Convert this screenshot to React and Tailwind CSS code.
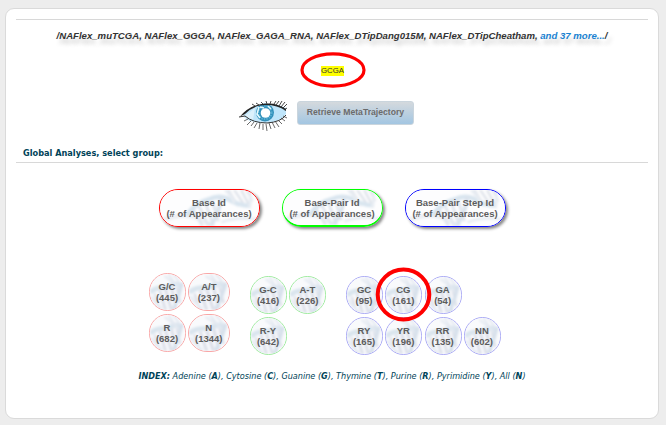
const RED = 'border-[#f9a6a6]';
const GREEN = 'border-[#9deb9d]';
const BLUE = 'border-[#a9a9f5]';

function Helix({ small }) {
  return (
    <svg
      className="absolute inset-0 h-full w-full blur-[0.8px]"
      viewBox={small ? '0 0 36 37' : '0 0 100 38'}
      preserveAspectRatio="none"
      fill="none"
    >
      {small ? (
        <>
          <rect x="-2" y="-2" width="40" height="41" fill="#f9fafc" />
          <path d="M12 16Q22 8 32 11Q31 26 24 38H8Z" fill="#eceff5" />
          <path d="M5 20 10 37M10 17 16 37M16 16 22 37M22 14 27 35M27 12 31 30" stroke="#dcdfe8" strokeWidth="2.4" />
          <path d="M7 19 13 37M13 17 19 37M19 15 25 37M25 13 30 33" stroke="#fcfcfe" strokeWidth="1.7" />
          <path d="M0 19Q6 14 12 14T24 11Q28 9 32 13" stroke="#dae5ee" strokeWidth="5" />
          <path d="M19 0 29 15M24 0 32 11M15 2 24 9" stroke="#e4e9f1" strokeWidth="2" />
          <path d="M33 9Q30 22 24 37" stroke="#d7e1ec" strokeWidth="3.6" />
          <path d="M1 23Q6 31 12 36" stroke="#e8edf4" strokeWidth="3" />
        </>
      ) : (
        <>
          <rect x="-2" y="-2" width="104" height="42" fill="#fdfdfe" />
          <path d="M0 33Q14 27 26 27T52 38" stroke="#eceff4" strokeWidth="5" />
          <path d="M33 20 43 38M39 16 49 38M46 14 54 38M53 12 59 33" stroke="#e1e6ee" strokeWidth="3" />
          <path d="M69 0 79 17M75 0 86 17M82 0 91 18M88 0 93 12" stroke="#dfe3ea" strokeWidth="2.4" />
          <path d="M27 27Q36 13 49 10Q59 5 68 9Q78 16 92 17" stroke="#d9e5ef" strokeWidth="4.8" />
          <path d="M62 7Q60 25 51 38" stroke="#dae3ed" strokeWidth="4" />
          <path d="M62 34Q78 28 98 31M66 0Q73 7 75 14M90 0Q93 7 90 19" stroke="#e8edf3" strokeWidth="3" />
        </>
      )}
    </svg>
  );
}

function Pill({ label, color, gap }) {
  return (
    <div className={`h-[38px] w-[101px] shrink-0 rounded-[19px] shadow-[2px_2px_3px_#888] ${gap}`}>
      <div className={`relative flex h-full flex-col items-center justify-center overflow-hidden rounded-[19px] border pr-px font-bold ${color}`}>
        <Helix />
        <span className="relative text-[9.5px] leading-[11px] whitespace-nowrap">{label}</span>
        <span className="relative text-[9.5px] leading-[11px] whitespace-nowrap">(# of Appearances)</span>
      </div>
    </div>
  );
}

function Bead({ label, count, color, wide, ring }) {
  return (
    <div className={`relative h-[38px] shrink-0 ${wide ? 'w-[42px]' : 'w-[37px]'}`}>
      <div className={`relative flex h-full flex-col items-center justify-center overflow-hidden rounded-[19px] border pr-px font-bold ${color}`}>
        <Helix small />
        <span className="relative text-[9.5px] leading-[11px] whitespace-nowrap">{label}</span>
        <span className="relative text-[9.5px] leading-[11px] whitespace-nowrap">({count})</span>
      </div>
      {ring && (
        <svg className="absolute -top-[9px] -left-[10px] z-10" width="57" height="56" fill="none">
          <ellipse cx="28.5" cy="27.5" rx="25.8" ry="25" stroke="#f00" strokeWidth="4" />
        </svg>
      )}
    </div>
  );
}

function Group({ rows, color, className }) {
  return (
    <div className={`flex shrink-0 flex-col gap-[3px] ${className}`}>
      {rows.map((row, i) => (
        <div key={i} className="flex gap-[2.3px]">
          {row.map((b) => (
            <Bead key={b[0]} label={b[0]} count={b[1]} color={color} wide={b[2]} ring={b[0] === 'CG'} />
          ))}
        </div>
      ))}
    </div>
  );
}

function Eye() {
  return (
    <svg width="48" height="34" viewBox="0 0 48 34" fill="none" className="shrink-0">
      <path d="M4 16Q10 8 20 5Q35 2 47 8V14Q42 22 27 23Q12 23 6 18Z" fill="#bfe5fa" />
      <path d="M5 16Q10 13 16 8L14 20Q8 19 5 16Z" fill="#dcf1fc" />
      <circle cx="26" cy="12.5" r="9" fill="#318fb9" />
      <circle cx="26" cy="12.5" r="6.6" stroke="#57aed2" strokeWidth="2" strokeDasharray="1.5 1" />
      <circle cx="26.5" cy="13" r="4.8" fill="#fff" />
      <path d="M20 7 18 14 21 18M29 6 32 9M21 7 25 8" stroke="#e8fbff" strokeWidth="1.6" />
      <path d="M1 16.5Q9 7 20 4.5Q36 1 47 9V11Q36 3.5 21 5.5Q12 7.5 6 14Z" fill="#222" />
      <path d="M0 17 6 16Q14 23 28 23Q42 22 47 15" stroke="#333" strokeWidth="1" />
      <path d="M16 6 13 4M20 5 17 3M24 4 22 2M28 4 27 1M31 4 32 1M35 4 37 1M37 5 40 1M40 6 43 1M42 7 46 2M44 8 48 4M45 10 48 8" stroke="#333" strokeWidth=".9" />
      <path d="M9 19 5 21M12 21 8 25M15 22 12 26M18 23 15 28M21 23 20 29M24 24 24 30M27 24 28 31M30 23 32 29M33 22 36 28M36 21 40 27M39 20 43 24M42 18 46 21M44 16 48 18" stroke="#444" strokeWidth=".8" />
    </svg>
  );
}

export default function App() {
  return (
    <div className="h-[425px] w-[666px] overflow-hidden bg-[#ededed] pt-[8px] pl-[5px] font-['Liberation_Sans',Arial,sans-serif] text-[#5c5c5c]">
      <main className="h-[411px] w-[654px] rounded-[9px] border border-[#dadada] bg-white px-[10px] pt-[10px]">
        <div className="h-px bg-[#d8d8d8]" />
        <h1 className="mt-[9px] h-[14px] text-center text-[9.6px] leading-[14px] font-bold whitespace-nowrap text-[#333] italic [text-shadow:3px_5px_4px_#ccc]">
          /NAFlex_muTCGA, NAFlex_GGGA, NAFlex_GAGA_RNA, NAFlex_DTipDang015M, NAFlex_DTipCheatham, <a className="text-[#1982d1]">and 37 more...</a>/
        </h1>
        <div className="mt-[9px] flex h-[36px] justify-center">
          <div className="relative flex h-[36px] w-[67px] items-center justify-center pt-px pl-px">
            <span className="bg-[#ff0] text-[7.8px] leading-[10px] text-[#333]">GCGA</span>
            <svg className="absolute inset-0" width="68" height="37" fill="none">
              <ellipse cx="34" cy="18" rx="31" ry="16.2" stroke="#f00" strokeWidth="3.2" />
            </svg>
          </div>
        </div>
        <div className="mt-[12px] flex h-[34px] pl-[223px]">
          <Eye />
          <button className="mt-px ml-[10px] h-[24px] w-[117px] rounded-[3px] border border-[#cad5dd] bg-linear-to-b from-[#d4d9dd] to-[#a3c6e2] pb-px text-[8.65px] font-bold whitespace-nowrap text-[#6b6b6b]">
            Retrieve MetaTrajectory
          </button>
        </div>
        <h2 className="mt-[12px] h-[14px] pl-[7px] font-['DejaVu_Sans_Condensed','DejaVu_Sans',sans-serif] text-[9.1px] leading-[14px] font-bold whitespace-nowrap text-[#004358] [font-stretch:condensed]">
          Global Analyses, select group:
        </h2>
        <div className="mt-[2px] h-px bg-[#d8d8d8]" />
        <div className="mt-[26px] flex pl-[143px]">
          <Pill label="Base Id" color="border-[#f00]" gap="" />
          <Pill label="Base-Pair Id" color="border-[#0f0] border-b-2" gap="ml-[22px]" />
          <Pill label="Base-Pair Step Id" color="border-[#00f]" gap="ml-[22px]" />
        </div>
        <div className="mt-[46px] flex h-[84px] items-start pl-[133px]">
          <Group color={RED} className="w-[101px]" rows={[[['G/C', 445], ['A/T', 237, true]], [['R', 682], ['N', 1344, true]]]} />
          <Group color={GREEN} className="w-[96px] pt-[3px]" rows={[[['G-C', 416], ['A-T', 226]], [['R-Y', 642]]]} />
          <Group color={BLUE} className="pt-[3px]" rows={[[['GC', 95], ['CG', 161], ['GA', 54]], [['RY', 165], ['YR', 196], ['RR', 135], ['NN', 602]]]} />
        </div>
        <p className="mt-[12px] h-[14px] text-center font-['DejaVu_Sans_Condensed','DejaVu_Sans',sans-serif] text-[9.02px] leading-[14px] whitespace-nowrap text-[#004358] italic [font-stretch:condensed]">
          <b>INDEX:</b> Adenine (<b>A</b>), Cytosine (<b>C</b>), Guanine (<b>G</b>), Thymine (<b>T</b>), Purine (<b>R</b>), Pyrimidine (<b>Y</b>), All (<b>N</b>)
        </p>
      </main>
    </div>
  );
}
